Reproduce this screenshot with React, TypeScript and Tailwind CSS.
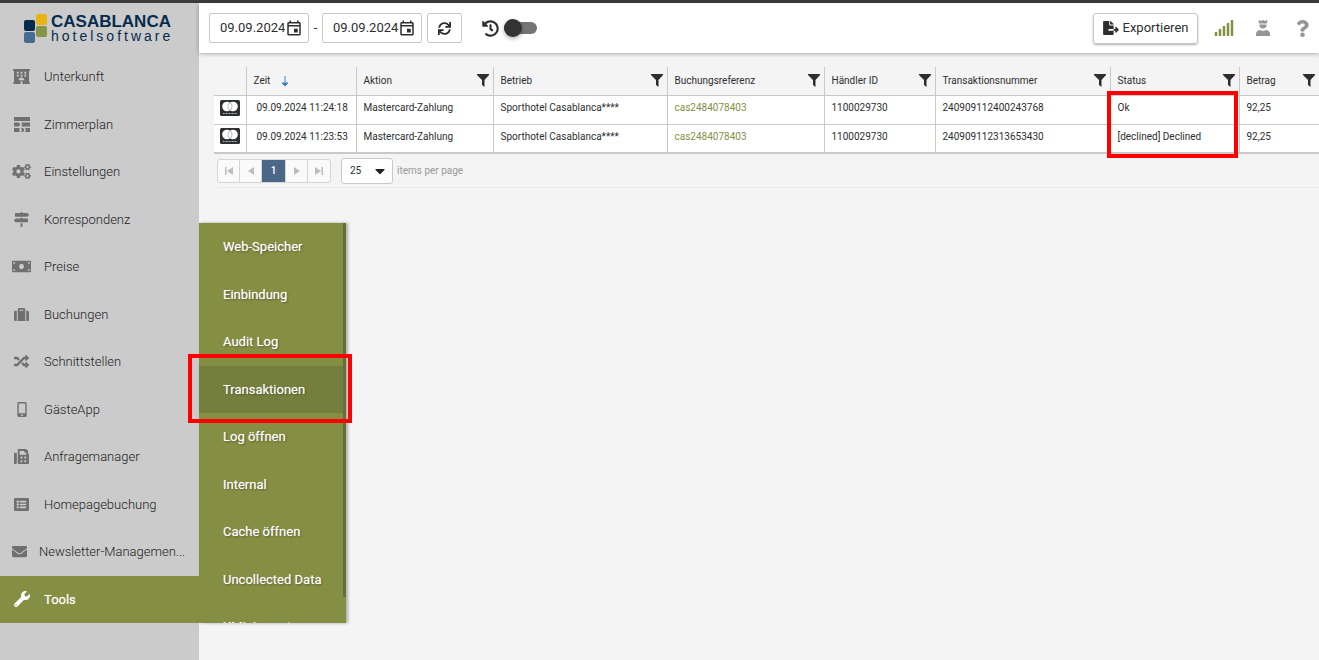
import type { ComponentType, ReactNode } from "react";
import {
  FaCaretDown,
  FaCogs,
  FaEnvelope,
  FaFax,
  FaFileExport,
  FaHistory,
  FaHotel,
  FaListAlt,
  FaMapSigns,
  FaMobileAlt,
  FaMoneyBill,
  FaQuestion,
  FaRandom,
  FaSignal,
  FaSuitcase,
  FaSync,
  FaWrench,
} from "react-icons/fa";
import { MdOutlineEvent } from "react-icons/md";

type IconType = ComponentType<{ className?: string }>;

const RoomPlanIcon = ({ className }: { className?: string }) => (
  <svg viewBox="0 0 16 15" fill="currentColor" className={className}>
    <path d="M0 0h16v4H0zM0 5.500h4.500l2 2-2 2H0zM7 5.500h9v4H7l1.500-2zM0 11h5.500v4H0zM7 11h2l1.500 2L9 15H7l1-2zM11 11h5v4h-5l1-2z" />
  </svg>
);

const OperatorIcon = ({ className }: { className?: string }) => (
  <svg viewBox="0 0 14 16" fill="currentColor" className={className}>
    <path d="M2.500 0 5 1l2-1 2 1 2.500-1-.5 3.500H3zM3.300 4.500h7.400C10.700 7 9 8.500 7 8.500S3.300 7 3.300 4.500zM3.500 10 7 11l3.500-1c2 .4 3.500 2 3.500 4v2H0v-2c0-2 1.500-3.600 3.500-4z" />
  </svg>
);

const FunnelIcon = () => (
  <svg viewBox="0 0 12 13" fill="currentColor" className="h-[13px] w-3">
    <path d="M0 0h12v1L7.500 6v7L5 11V6L0 1z" />
  </svg>
);

const Logo = () => (
  <div className="flex items-center gap-[3px] font-['Liberation_Sans',sans-serif] text-[#062b4d]">
    <svg viewBox="0 0 24 29" className="h-[29px] w-6">
      <rect x="0" y="6" width="11" height="11" rx="2" fill="#062b4d" />
      <rect x="12" y="0" width="11" height="11" rx="2" fill="#e9b411" />
      <rect x="0" y="18" width="11" height="11" rx="2" fill="#476c91" />
      <rect x="12" y="12" width="11" height="11" rx="2" fill="#869445" />
    </svg>
    <div>
      <div className="text-[17px] leading-[15px] font-bold">CASABLANCA</div>
      <div className="text-[14px] leading-[14px] tracking-[3px]">hotelsoftware</div>
    </div>
  </div>
);

const MastercardIcon = () => (
  <svg viewBox="0 0 20 16" className="block h-4 w-5" role="img" aria-label="Mastercard">
    <rect width="20" height="16" rx="1.500" fill="#2d3033" />
    <circle cx="7" cy="6.500" r="4.800" fill="#fff" />
    <circle cx="13" cy="6.500" r="4.800" fill="#fff" />
    <ellipse cx="10" cy="6.500" rx="2" ry="3.700" fill="none" stroke="#a9a9a9" strokeWidth=".8" />
    <path d="M3 13.500h14" stroke="#bbb" strokeWidth="1" strokeDasharray="1 .5" />
  </svg>
);

const menu: { label: string; icon: IconType; size: string }[] = [
  { label: "Unterkunft", icon: FaHotel, size: "h-[15px] w-[17px]" },
  { label: "Zimmerplan", icon: RoomPlanIcon, size: "h-[15px] w-4" },
  { label: "Einstellungen", icon: FaCogs, size: "h-[15px] w-[19px]" },
  { label: "Korrespondenz", icon: FaMapSigns, size: "h-[15px] w-[15px]" },
  { label: "Preise", icon: FaMoneyBill, size: "h-[19px] w-[19px]" },
  { label: "Buchungen", icon: FaSuitcase, size: "h-[15px] w-[15px]" },
  { label: "Schnittstellen", icon: FaRandom, size: "h-[15px] w-[15px]" },
  { label: "GästeApp", icon: FaMobileAlt, size: "h-[15px] w-[10px]" },
  { label: "Anfragemanager", icon: FaFax, size: "h-[15px] w-[15px]" },
  { label: "Homepagebuchung", icon: FaListAlt, size: "h-[15px] w-[15px]" },
];

const toolLinks = [
  "Web-Speicher",
  "Einbindung",
  "Audit Log",
  "Transaktionen",
  "Log öffnen",
  "Internal",
  "Cache öffnen",
  "Uncollected Data",
  "XML Import",
];

const rows = [
  { time: "09.09.2024 11:24:18", number: "240909112400243768", status: "Ok" },
  { time: "09.09.2024 11:23:53", number: "240909112313653430", status: "[declined] Declined" },
];

const Sidebar = () => (
  <nav className="w-[199px] shrink-0 bg-[#cbcbcb] text-[13px] font-light text-[#222]">
    <div className="h-[50px] pt-[11px] pl-6">
      <Logo />
    </div>
    <ul className="grid h-[570px] grid-rows-12">
      {menu.map(({ label, icon: Icon, size }) => (
        <li key={label}>
          <a href="#" className="flex h-full items-center">
            <span className="flex w-11 justify-center pr-[1px] text-[#707070]">
              <Icon className={size} />
            </span>
            {label}
          </a>
        </li>
      ))}
      <li>
        <a href="#" className="flex h-full items-center">
          <span className="flex w-[39px] justify-center text-[#707070]">
            <FaEnvelope className="h-[15px] w-[15px]" />
          </span>
          <span>Newsletter-Managemen...</span>
        </a>
      </li>
      <li className="relative bg-[#858f43] font-normal text-white">
        <a href="#" className="flex h-full items-center [text-shadow:0_0_1px_rgba(255,255,255,0.5)]">
          <span className="flex w-11 justify-center">
            <FaWrench className="h-4 w-4" />
          </span>
          Tools
        </a>
        <ToolsMenu />
      </li>
    </ul>
  </nav>
);

const ToolsMenu = () => (
  <div className="absolute bottom-0 left-full z-10 w-[147px]">
    <div className="relative h-[400px] overflow-hidden bg-[#858f43] shadow-[2px_0_3px_rgba(0,0,0,0.3)]">
      <ul className="grid h-[428px] grid-rows-9 [text-shadow:0_0_1px_rgba(255,255,255,0.5),1px_1px_2px_rgba(0,0,0,0.4)]">
        {toolLinks.map((label) => (
          <li key={label}>
            <a
              href="#"
              className={
                label === "Transaktionen"
                  ? "flex h-full items-center bg-[#757f3d] pl-6"
                  : "flex h-full items-center pl-6"
              }
            >
              {label}
            </a>
          </li>
        ))}
      </ul>
      <div className="absolute top-0 right-0 h-[374px] w-[3px] bg-[#676d3b]" />
    </div>
    <div className="pointer-events-none absolute top-[131px] -right-[6px] -left-[11px] h-[69px] border-4 border-[#ff0000]" />
  </div>
);

const DateField = ({ label }: { label: string }) => (
  <div className="flex h-[30px] w-[100px] items-center rounded-[2px] border border-[#c8c8c8] bg-white pl-[10px]">
    <input aria-label={label} defaultValue="09.09.2024" className="w-[65px] outline-none" />
    <button aria-label="Kalender">
      <MdOutlineEvent className="h-[18px] w-[18px]" />
    </button>
  </div>
);

const Topbar = () => (
  <header className="flex h-[50px] items-center bg-white pr-2 pl-[10px] text-[13px] text-[#2e2e2e] shadow-[0_1px_4px_rgba(0,0,0,0.3)]">
    <DateField label="Von" />
    <span className="w-[13px] text-center">-</span>
    <DateField label="Bis" />
    <button
      aria-label="Aktualisieren"
      className="ml-[5px] flex h-[30px] w-[35px] items-center justify-center rounded-[2px] border border-[#c8c8c8]"
    >
      <FaSync className="h-[13px] w-[13px]" />
    </button>
    <FaHistory className="ml-5 h-[17px] w-[17px]" />
    <input
      type="checkbox"
      aria-label="Automatisch aktualisieren"
      className="ml-[5px] flex h-3 w-[33px] appearance-none items-center rounded-full bg-[#757575] before:h-[18px] before:w-[18px] before:shrink-0 before:rounded-full before:bg-[#333] before:shadow-[0_2px_4px_rgba(0,0,0,0.3)]"
    />
    <button className="ml-auto flex h-[31px] w-[105px] items-center justify-center gap-1 rounded-[3px] border border-[#c8c8c8] shadow-[0_1px_2px_rgba(0,0,0,0.3)]">
      <FaFileExport className="h-[14px] w-4" />
      Exportieren
    </button>
    <button aria-label="Verbindung" className="ml-4 text-[#858f43]">
      <FaSignal className="h-[18px] w-5" />
    </button>
    <button aria-label="Benutzer" className="ml-[22px] text-[#959595]">
      <OperatorIcon className="h-4 w-[14px]" />
    </button>
    <button aria-label="Hilfe" className="ml-6 text-[#959595]">
      <FaQuestion className="h-[17px] w-[17px]" />
    </button>
  </header>
);

const HeadCell = ({ children, width }: { children: ReactNode; width: string }) => (
  <th className={`${width} border-l border-[#c9c9c9] pr-1 pl-[7px] text-left font-normal`}>
    <div className="flex items-center justify-between">
      {children}
      <FunnelIcon />
    </div>
  </th>
);

const cell = "border-l border-[#c9c9c9] pb-1 pl-[7px]";

const TransactionTable = () => (
  <table className="w-full table-fixed border-b-2 border-[#c9c9c9] text-[10px] whitespace-nowrap">
    <thead>
      <tr className="h-[28px] border-b border-[#c9c9c9]">
        <td className="w-8" />
        <th className="w-[110px] border-l border-[#c9c9c9] pl-[7px] text-left font-normal">
          <span className="flex items-center gap-[11px]">
            Zeit
            <svg viewBox="0 0 8 12" className="h-3 w-2" fill="none" stroke="#3f83cf">
              <path d="M4 1v9" />
              <path d="M1 8h6l-3 3z" fill="#3f83cf" />
            </svg>
          </span>
        </th>
        <HeadCell width="w-[137px]">Aktion</HeadCell>
        <HeadCell width="w-[174px]">Betrieb</HeadCell>
        <HeadCell width="w-[157px]">Buchungsreferenz</HeadCell>
        <HeadCell width="w-[111px]">Händler ID</HeadCell>
        <HeadCell width="w-[175px]">Transaktionsnummer</HeadCell>
        <HeadCell width="w-[129px]">Status</HeadCell>
        <HeadCell width="w-auto">Betrag</HeadCell>
      </tr>
    </thead>
    <tbody>
      {rows.map((row, index) => (
        <tr key={row.number} className="h-[29px] border-b border-[#c9c9c9] bg-white last:border-b-0">
          <td className="pb-1 pl-[6px]">
            <MastercardIcon />
          </td>
          <td className="border-l border-[#c9c9c9] pb-1 pl-[10px]">{row.time}</td>
          <td className={cell}>Mastercard-Zahlung</td>
          <td className={cell}>Sporthotel Casablanca****</td>
          <td className={cell}>
            <a href="#" className="text-[#858f43]">
              cas2484078403
            </a>
          </td>
          <td className={cell}>1100029730</td>
          <td className={cell}>{row.number}</td>
          <td className="relative border-l border-[#c9c9c9] pb-1 pl-[7px]">
            {row.status}
            {index === 0 && (
              <div className="pointer-events-none absolute -top-[5px] -left-1 h-[67px] w-[131px] border-4 border-[#ff0000]" />
            )}
          </td>
          <td className={cell}>92,25</td>
        </tr>
      ))}
    </tbody>
  </table>
);

const PageButton = ({ label, path }: { label: string; path: string }) => (
  <button aria-label={label} className="flex w-[22px] items-center justify-center text-[#bdbdbd]">
    <svg viewBox="0 0 8 8" fill="currentColor" className="h-2 w-2">
      <path d={path} />
    </svg>
  </button>
);

const Pager = () => (
  <div className="flex h-[34px] items-center rounded-bl border-b border-[#ebebeb] pl-[3px] text-[10px]">
    <div className="flex h-6 divide-x divide-[#d5d5d5] overflow-hidden rounded-[3px] border border-[#d5d5d5] bg-[#fafafa]">
      <PageButton label="Erste Seite" path="M0 0h1.500v8H0zM8 0v8L2 4z" />
      <PageButton label="Vorherige Seite" path="M7 0v8L1 4z" />
      <button className="w-6 bg-[#4b6788] font-medium text-white">1</button>
      <PageButton label="Nächste Seite" path="M1 0v8l6-4z" />
      <PageButton label="Letzte Seite" path="M0 0v8l6-4zM6.500 0H8v8H6.500z" />
    </div>
    <label className="ml-[10px] flex items-center gap-1 text-[#999]">
      <span className="relative flex items-center">
        <select className="h-[26px] w-[52px] appearance-none rounded-[3px] border border-[#c9c9c9] bg-white pl-2 text-[#2e2e2e]">
          <option>25</option>
        </select>
        <FaCaretDown className="pointer-events-none absolute right-[6px] h-4 w-[14px] text-[#222]" />
      </span>
      items per page
    </label>
  </div>
);

const App = () => {
  return (
    <div className="flex min-h-screen flex-col bg-[#f4f4f4] font-[Roboto,sans-serif] text-[#2e2e2e]">
      <div className="h-[3px] bg-[#3c3c3c]" />
      <div className="flex flex-1">
        <Sidebar />
        <div className="flex min-w-0 flex-1 flex-col">
          <Topbar />
          <main className="pt-[14px] pl-[15px]">
            <TransactionTable />
            <Pager />
          </main>
        </div>
      </div>
    </div>
  );
};

export default App;
